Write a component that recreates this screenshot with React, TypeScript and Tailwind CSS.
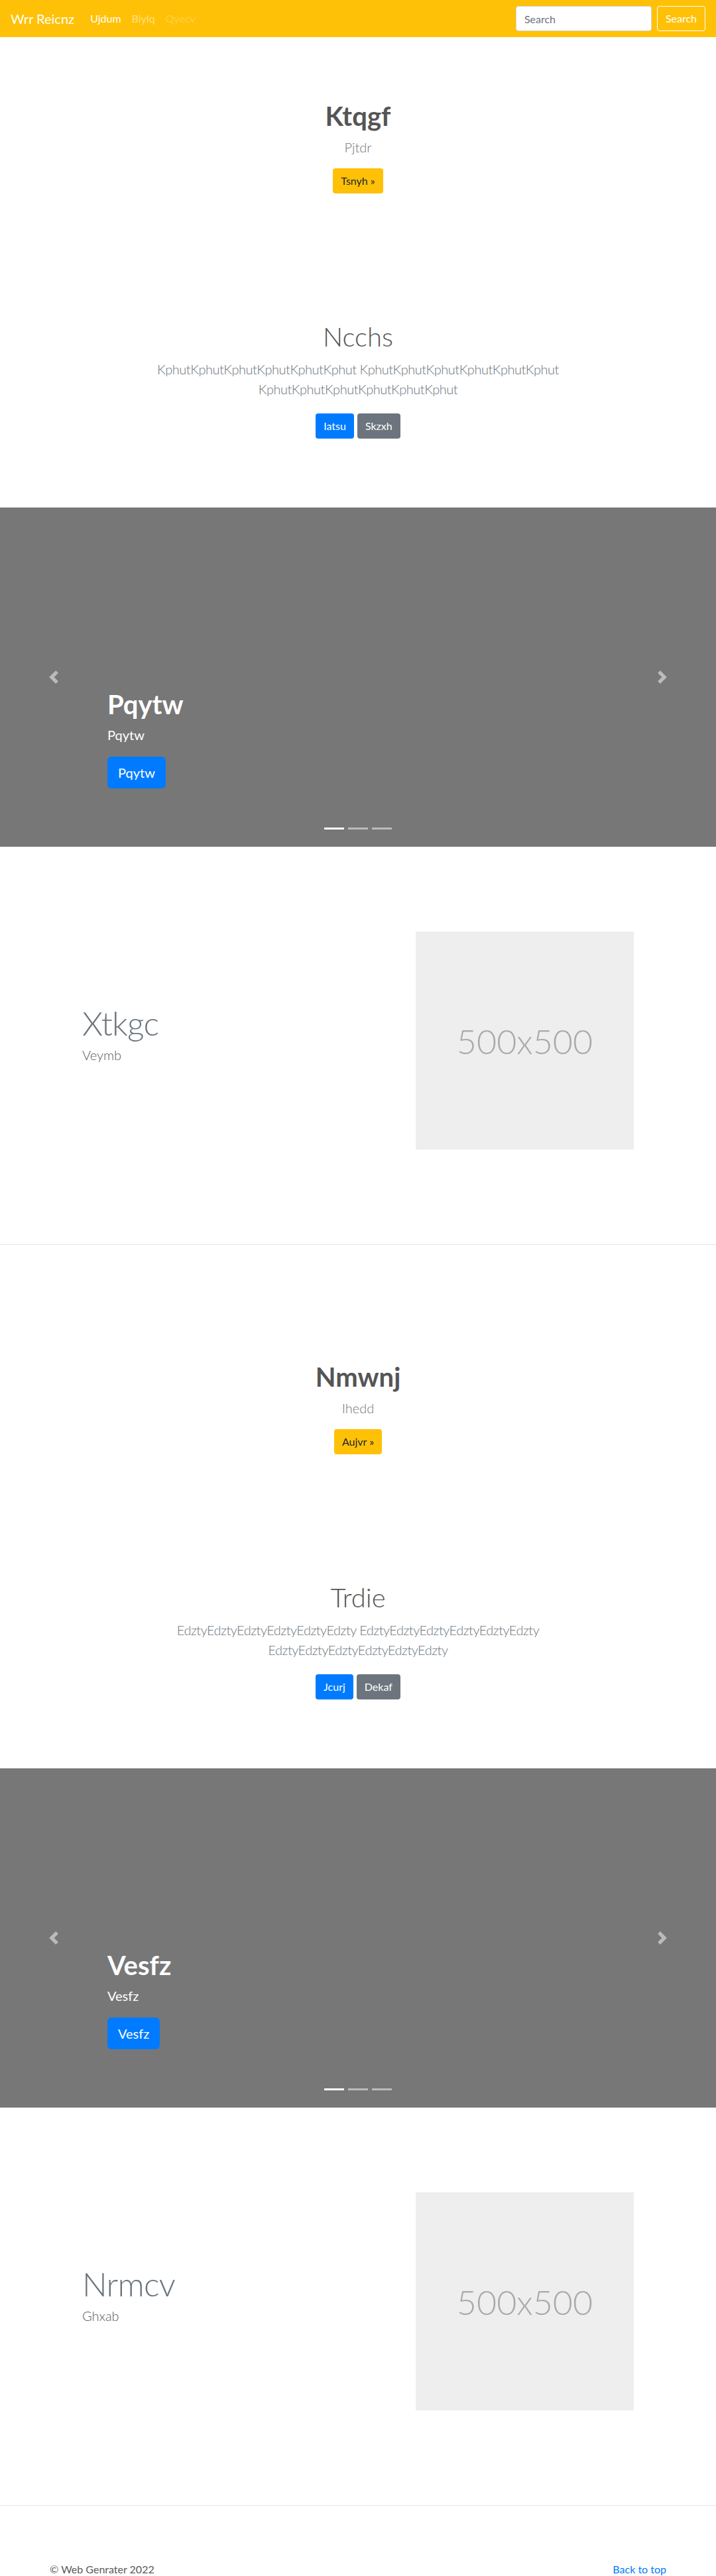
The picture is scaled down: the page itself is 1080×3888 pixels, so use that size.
import { FC } from 'react';

const PrevIcon = () => (
  <svg width="20" height="20" viewBox="0 0 8 8" fill="#fff" className="opacity-50">
    <path d="M5.25 0l-4 4 4 4 1.5-1.5-2.5-2.5 2.5-2.5-1.5-1.5z" />
  </svg>
);

const NextIcon = () => (
  <svg width="20" height="20" viewBox="0 0 8 8" fill="#fff" className="opacity-50">
    <path d="M2.75 0l-1.5 1.5 2.5 2.5-2.5 2.5 1.5 1.5 4-4-4-4z" />
  </svg>
);

const Navbar: FC = () => (
  <nav className="h-14 bg-[#ffc107] px-4 flex items-center">
    <a className="text-[20px] leading-[30px] text-white mr-4">Wrr Reicnz</a>
    <ul className="flex text-[16px] leading-6">
      <li className="px-2 text-white">Ujdum</li>
      <li className="px-2 text-white/50">Biylq</li>
      <li className="px-2 text-white/25">Qyecv</li>
    </ul>
    <form className="ml-auto flex items-center">
      <input
        placeholder="Search"
        className="w-[205px] h-[38px] px-3 mr-2 rounded border border-[#ced4da] bg-white text-[16px] text-[#495057] placeholder:text-[#6c757d] outline-none"
      />
      <button type="button" className="h-[38px] px-3 rounded border border-white text-white text-[16px]">
        Search
      </button>
    </form>
  </nav>
);

type HeroProps = {
  title: string;
  lead: string;
  cta: string;
  heading: string;
  text: string;
  primary: string;
  secondary: string;
};

const Hero: FC<HeroProps> = ({ title, lead, cta, heading, text, primary, secondary }) => (
  <section className="text-center pt-[95px]">
    {/* Intro block */}
    <h1 className="text-[40px] leading-[48px] font-bold text-[#555]">{title}</h1>
    <p className="mt-2 text-[20px] leading-[30px] font-light text-[#6c757d]">{lead}</p>
    <button className="mt-[17px] h-[38px] px-3 rounded bg-[#ffc107] text-[#212529] text-[16px]">
      {cta} »
    </button>

    {/* Heading block */}
    <h1 className="mt-[192px] text-[40px] leading-[48px] font-light text-[#555]">{heading}</h1>
    <p className="mt-[10px] mx-auto max-w-[680px] text-[20px] leading-[30px] font-light tracking-[-0.5px] text-[#6c757d]">
      {text}
    </p>
    <div className="mt-[22px] flex justify-center gap-[5px]">
      <button className="h-[38px] px-3 rounded bg-[#007bff] text-white text-[16px]">{primary}</button>
      <button className="h-[38px] px-3 rounded bg-[#6c757d] text-white text-[16px]">{secondary}</button>
    </div>
  </section>
);

const Carousel: FC<{ title: string }> = ({ title }) => (
  <div className="mt-[104px] relative h-[512px] bg-[#777] flex flex-col justify-end pl-[162px] pb-[88px] text-white">
    <h1 className="text-[40px] leading-[48px] font-bold">{title}</h1>
    <p className="mt-[7px] text-[20px] leading-[30px]">{title}</p>
    <div className="mt-[18px]">
      <button className="h-12 px-4 rounded-md bg-[#007bff] text-white text-[20px]">{title}</button>
    </div>

    {/* Controls */}
    <div className="absolute left-0 top-0 bottom-0 w-[162px] flex items-center justify-center">
      <PrevIcon />
    </div>
    <div className="absolute right-0 top-0 bottom-0 w-[162px] flex items-center justify-center">
      <NextIcon />
    </div>

    {/* Indicators */}
    <div className="absolute bottom-[26px] left-0 right-0 flex justify-center gap-[6px]">
      <span className="w-[30px] h-[3px] bg-white" />
      <span className="w-[30px] h-[3px] bg-white/50" />
      <span className="w-[30px] h-[3px] bg-white/50" />
    </div>
  </div>
);

const Featurette: FC<{ title: string; lead: string }> = ({ title, lead }) => (
  <div className="pt-[128px] px-[124px] flex items-center justify-between">
    <div className="mb-4">
      <h2 className="text-[50px] leading-[50px] font-light tracking-[-0.8px] text-[#6c757d]">{title}</h2>
      <p className="mt-2 text-[20px] leading-[30px] font-light text-[#5a5a5a]">{lead}</p>
    </div>
    <div className="w-[329px] h-[329px] bg-[#eee] flex items-center justify-center text-[52px] font-light text-[#aaa]">
      500x500
    </div>
  </div>
);

const Divider: FC = () => <hr className="mt-[143px] mb-20 border-0 border-t border-[#e5e5e5]" />;

export default function App() {
  return (
    <div className="min-h-[3888px] bg-white font-['Lato','Open_Sans',sans-serif] text-[#5a5a5a]">
      <Navbar />

      <Hero
        title="Ktqgf"
        lead="Pjtdr"
        cta="Tsnyh"
        heading="Ncchs"
        text="KphutKphutKphutKphutKphutKphut KphutKphutKphutKphutKphutKphut KphutKphutKphutKphutKphutKphut"
        primary="Iatsu"
        secondary="Skzxh"
      />
      <Carousel title="Pqytw" />
      <Featurette title="Xtkgc" lead="Veymb" />
      <Divider />

      <Hero
        title="Nmwnj"
        lead="Ihedd"
        cta="Aujvr"
        heading="Trdie"
        text="EdztyEdztyEdztyEdztyEdztyEdzty EdztyEdztyEdztyEdztyEdztyEdzty EdztyEdztyEdztyEdztyEdztyEdzty"
        primary="Jcurj"
        secondary="Dekaf"
      />
      <Carousel title="Vesfz" />
      <Featurette title="Nrmcv" lead="Ghxab" />
      <Divider />

      {/* Footer */}
      <footer className="px-[75px] pt-1 flex justify-between text-[16px] leading-6">
        <p className="text-[#5a5a5a]">© Web Genrater 2022</p>
        <a className="text-[#007bff]">Back to top</a>
      </footer>
    </div>
  );
}
